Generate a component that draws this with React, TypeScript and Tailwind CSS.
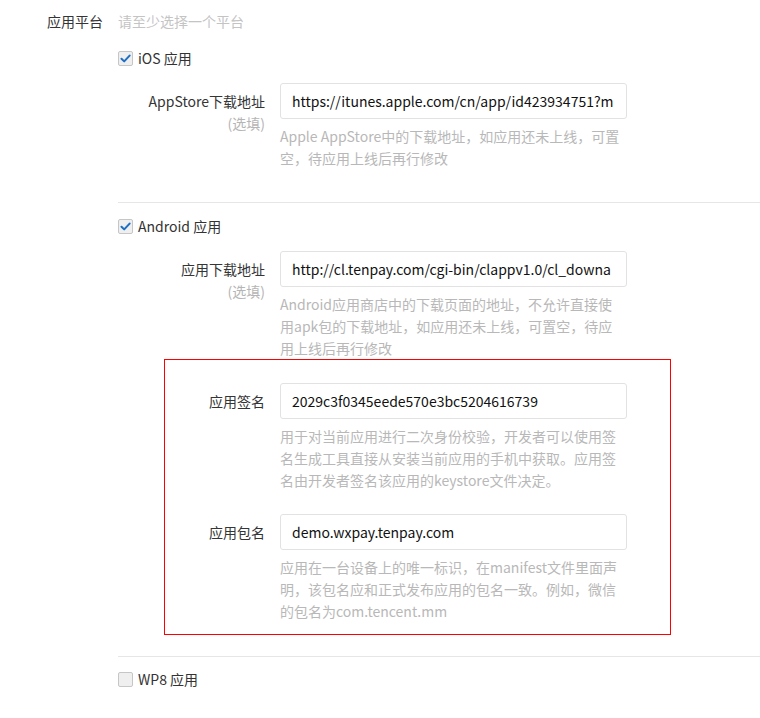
import React from 'react';

const FONT = "font-['Segoe_UI','Noto_Sans_CJK_SC','Microsoft_YaHei',sans-serif]";

function Checkbox({ checked, label }: { checked: boolean; label: string }) {
  return (
    <div className="flex h-[22px] items-center leading-[22px]">
      <span className="flex h-[15px] w-[15px] items-center justify-center rounded-[2px] border border-[#c6c6c6] bg-[#efefef]">
        {checked && (
          <svg width="11" height="11" viewBox="0 0 11 11" fill="none">
            <path d="M1.5 5.8 L4.2 8.4 L9.6 2.6" stroke="#1c6fc4" strokeWidth="2" strokeLinecap="round" strokeLinejoin="round" />
          </svg>
        )}
      </span>
      <span className="ml-[5px] text-[#333]">{label}</span>
    </div>
  );
}

function FieldRow({
  label,
  optional,
  value,
  hint,
  labelWidth,
}: {
  label: string;
  optional?: boolean;
  value: string;
  hint: string[];
  labelWidth: string;
}) {
  return (
    <div className="flex">
      <div className={`${labelWidth} shrink-0 pr-[15px] pt-[7px] text-right leading-[22px]`}>
        <div className="text-[#353535]">{label}</div>
        {optional && <div className="text-[#b5b5b5]">(选填)</div>}
      </div>
      <div className="w-[347px]">
        <div className="flex h-[36px] items-center overflow-hidden rounded-[3px] border border-[#e2e2e2] px-[11px]">
          <span className="whitespace-nowrap text-[#111]">{value}</span>
        </div>
        <div className="mt-[6px] leading-[22px] text-[#b8b8b8]">
          {hint.map((line) => (
            <div key={line} className="whitespace-nowrap">
              {line}
            </div>
          ))}
        </div>
      </div>
    </div>
  );
}

export default function App() {
  return (
    <div className={`${FONT} min-h-[718px] w-[760px] overflow-hidden bg-white text-[14px]`}>
      {/* 应用平台 header */}
      <div className="flex pt-[10px] leading-[22px]">
        <div className="w-[103px] text-right text-[#353535]">应用平台</div>
        <div className="ml-[15px] text-[#c4c4c4]">请至少选择一个平台</div>
      </div>

      <div className="ml-[118px] mt-[15px]">
        {/* iOS */}
        <div className="border-b border-[#e6e6e6] pb-[33px]">
          <Checkbox checked label="iOS 应用" />
          <div className="mt-[14px]">
            <FieldRow
              labelWidth="w-[162px]"
              label="AppStore下载地址"
              optional
              value="https://itunes.apple.com/cn/app/id423934751?m"
              hint={['Apple AppStore中的下载地址，如应用还未上线，可置', '空，待应用上线后再行修改']}
            />
          </div>
        </div>

        {/* Android */}
        <div className="border-b border-[#e6e6e6] pb-[21px] pt-[12px]">
          <Checkbox checked label="Android 应用" />
          <div className="mt-[14px]">
            <FieldRow
              labelWidth="w-[162px]"
              label="应用下载地址"
              optional
              value="http://cl.tenpay.com/cgi-bin/clappv1.0/cl_downa"
              hint={[
                'Android应用商店中的下载页面的地址，不允许直接使',
                '用apk包的下载地址，如应用还未上线，可置空，待应',
                '用上线后再行修改',
              ]}
            />
          </div>

          <div className="ml-[46px] w-[507px] border border-[#ff0000] pb-[12px] pt-[23px]">
            <FieldRow
              labelWidth="w-[115px]"
              label="应用签名"
              value="2029c3f0345eede570e3bc5204616739"
              hint={[
                '用于对当前应用进行二次身份校验，开发者可以使用签',
                '名生成工具直接从安装当前应用的手机中获取。应用签',
                '名由开发者签名该应用的keystore文件决定。',
              ]}
            />
            <div className="mt-[23px]">
              <FieldRow
                labelWidth="w-[115px]"
                label="应用包名"
                value="demo.wxpay.tenpay.com"
                hint={[
                  '应用在一台设备上的唯一标识，在manifest文件里面声',
                  '明，该包名应和正式发布应用的包名一致。例如，微信',
                  '的包名为com.tencent.mm',
                ]}
              />
            </div>
          </div>
        </div>

        {/* WP8 */}
        <div className="pt-[11px]">
          <Checkbox checked={false} label="WP8 应用" />
        </div>
      </div>
    </div>
  );
}
